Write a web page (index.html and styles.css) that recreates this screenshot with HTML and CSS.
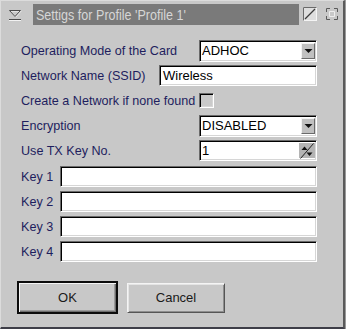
FILE: index.html
```html
<!DOCTYPE html>
<html>
<head>
<meta charset="utf-8">
<link rel="stylesheet" href="styles.css">
</head>
<body>
<div class="window">
  <div class="titlebar">
    <span class="tb-icon">
      <svg width="14" height="14" viewBox="0 0 14 14">
        <polygon points="1.5,3.5 12.5,3.5 7,9.5" fill="none" stroke="#f2f2f2" stroke-width="1" transform="translate(0.6,0.6)"/>
        <polygon points="1.5,3.5 12.5,3.5 7,9.5" fill="none" stroke="#4a4a4a" stroke-width="1"/>
        <line x1="1" y1="12.5" x2="13" y2="12.5" stroke="#4a4a4a" stroke-width="1"/>
        <line x1="1" y1="13.5" x2="13" y2="13.5" stroke="#f2f2f2" stroke-width="1"/>
      </svg>
    </span>
    <div class="title"><span class="title-text">Settigs for Profile 'Profile 1'</span></div>
    <span class="tb-btn first">
      <svg width="14" height="14" viewBox="0 0 14 14">
        <rect x="0.5" y="0.5" width="13" height="13" fill="#dedede" stroke="#f4f4f4"/>
        <path d="M0.5 13.5 V0.5 H13.5" fill="none" stroke="#6a6a6a"/>
        <line x1="2" y1="12" x2="12" y2="2" stroke="#3a3a3a" stroke-width="1.2"/>
      </svg>
    </span>
    <span class="tb-btn second">
      <svg width="14" height="14" viewBox="0 0 14 14">
        <path d="M1.5 5 V1.5 H5 M9 1.5 H12.5 V5 M12.5 9 V12.5 H9 M5 12.5 H1.5 V9" fill="none" stroke="#5a5a5a" stroke-width="1"/>
        <path d="M4.5 4.5 H9.5 V9.5 H4.5 Z" fill="none" stroke="#eeeeee" stroke-width="1"/>
      </svg>
    </span>
  </div>

  <div class="form">
    <div class="row">
      <span class="lbl">Operating Mode of the Card</span>
      <div class="combo">
        <span class="field-val">ADHOC</span>
        <span class="side-btn">
          <svg width="9" height="6" viewBox="0 0 9 6"><polygon points="0.5,1 8.5,1 4.5,5" fill="#111"/></svg>
        </span>
      </div>
    </div>
    <div class="row">
      <span class="lbl">Network Name (SSID)</span>
      <div class="text wide-text"><span class="field-val">Wireless</span></div>
    </div>
    <div class="row">
      <span class="lbl">Create a Network if none found</span>
      <div class="check-wrap"><span class="checkbox"></span></div>
    </div>
    <div class="row">
      <span class="lbl">Encryption</span>
      <div class="combo">
        <span class="field-val">DISABLED</span>
        <span class="side-btn">
          <svg width="9" height="6" viewBox="0 0 9 6"><polygon points="0.5,1 8.5,1 4.5,5" fill="#111"/></svg>
        </span>
      </div>
    </div>
    <div class="row">
      <span class="lbl">Use TX Key No.</span>
      <div class="combo spin">
        <span class="field-val">1</span>
        <span class="side-btn spin-btn">
          <svg width="14" height="16" viewBox="0 0 14 16">
            <line x1="0.5" y1="15.5" x2="13.5" y2="0.5" stroke="#222" stroke-width="1"/>
            <polygon points="1.5,7 7.5,7 4.5,3.5" fill="#111"/>
            <polygon points="6.5,9.5 12.5,9.5 9.5,13" fill="#111"/>
          </svg>
        </span>
      </div>
    </div>
    <div class="row key-row first-key">
      <span class="lbl key-lbl">Key 1</span>
      <div class="text key-text"></div>
    </div>
    <div class="row key-row">
      <span class="lbl key-lbl">Key 2</span>
      <div class="text key-text"></div>
    </div>
    <div class="row key-row">
      <span class="lbl key-lbl">Key 3</span>
      <div class="text key-text"></div>
    </div>
    <div class="row key-row">
      <span class="lbl key-lbl">Key 4</span>
      <div class="text key-text"></div>
    </div>
  </div>

  <div class="buttons">
    <div class="btn default-btn">OK</div>
    <div class="btn cancel-btn">Cancel</div>
  </div>
</div>
</body>
</html>
```
FILE: styles.css
```css
html, body {
  margin: 0;
  padding: 0;
}
body {
  background: #9a9a9a;
  width: 346px;
  height: 329px;
  overflow: hidden;
  font-family: "Liberation Sans", Arial, sans-serif;
}
.window {
  width: 342px;
  height: 326px;
  background: #c8c8c8;
  border-top: 1px solid #dcdcdc;
  border-left: 1px solid #dcdcdc;
  border-right: 2px solid #5a5a5a;
  border-bottom: 2px solid #3e3e48;
  box-sizing: content-box;
}
.titlebar {
  display: flex;
  align-items: flex-start;
  height: 27px;
  padding: 3px 0 0 7px;
  box-sizing: border-box;
}
.tb-icon {
  display: block;
  width: 14px;
  height: 14px;
  margin-top: 3px;
}
.tb-icon svg, .tb-btn svg {
  display: block;
}
.title {
  margin-left: 11px;
  width: 266px;
  height: 21px;
  background: #7a7a7a;
  overflow: hidden;
  white-space: nowrap;
}
.title-text {
  display: inline-block;
  margin-left: 3px;
  font-size: 15.5px;
  line-height: 21px;
  color: #d6d6d6;
  transform: scaleX(0.81);
  transform-origin: left center;
}
.tb-btn {
  display: block;
  width: 14px;
  height: 14px;
  margin-top: 3px;
}
.tb-btn.first {
  margin-left: 4px;
}
.tb-btn.second {
  margin-left: 8px;
}
.form {
  width: 296px;
  padding: 10px 0 0 20px;
}
.row {
  display: flex;
  align-items: center;
  justify-content: space-between;
  height: 25px;
}
.lbl {
  font-size: 12.6px;
  color: #1e1e5e;
  white-space: nowrap;
}
.combo, .text, .checkbox {
  box-sizing: border-box;
  background: #ffffff;
  border-style: solid;
  border-width: 1px;
  border-color: #6a6a6a #ffffff #ffffff #6a6a6a;
  box-shadow: inset 1px 1px 0 #000000, inset -1px -1px 0 #d6d6d6;
}
.combo {
  width: 118px;
  height: 22px;
  display: flex;
  align-items: center;
  padding: 2px 1px 2px 2px;
}
.combo.spin {
  height: 21px;
}
.field-val {
  flex: 1;
  font-size: 13px;
  color: #000;
  line-height: 16px;
  white-space: nowrap;
}
.side-btn {
  width: 14px;
  align-self: stretch;
  background: #c0c0c0;
  box-sizing: border-box;
  border-style: solid;
  border-width: 1px;
  border-color: #f2f2f2 #6a6a6a #6a6a6a #f2f2f2;
  display: flex;
  align-items: center;
  justify-content: center;
}
.spin-btn {
  width: 16px;
  border-width: 0;
  background: #b4b4b4;
}
.spin-btn svg {
  display: block;
}
.text {
  height: 21px;
  display: flex;
  align-items: center;
  padding: 2px 2px 2px 3px;
}
.wide-text {
  width: 158px;
}
.check-wrap {
  width: 118px;
  display: flex;
}
.checkbox {
  display: block;
  width: 15px;
  height: 15px;
  background: #cacaca;
  margin-top: -1px;
}
.first-key {
  margin-top: 1px;
}
.key-lbl {
  width: 39px;
}
.key-text {
  width: 257px;
}
.buttons {
  display: flex;
  align-items: center;
  gap: 9px;
  padding-left: 16px;
  margin-top: 17px;
}
.btn {
  box-sizing: border-box;
  display: flex;
  align-items: center;
  justify-content: center;
  font-size: 13px;
  color: #1a1a1a;
  background: #c8c8c8;
}
.default-btn {
  width: 101px;
  height: 33px;
  border: 2px solid #0c0c0c;
  box-shadow: inset 1px 1px 0 #f4f4f4, inset -1px -1px 0 #6e6e6e, inset -2px -2px 0 #9a9a9a;
}
.cancel-btn {
  width: 98px;
  height: 30px;
  border-style: solid;
  border-width: 1px;
  border-color: #f4f4f4 #555555 #555555 #f4f4f4;
  box-shadow: inset 1px 1px 0 #e4e4e4, inset -1px -1px 0 #8e8e8e;
}
```
